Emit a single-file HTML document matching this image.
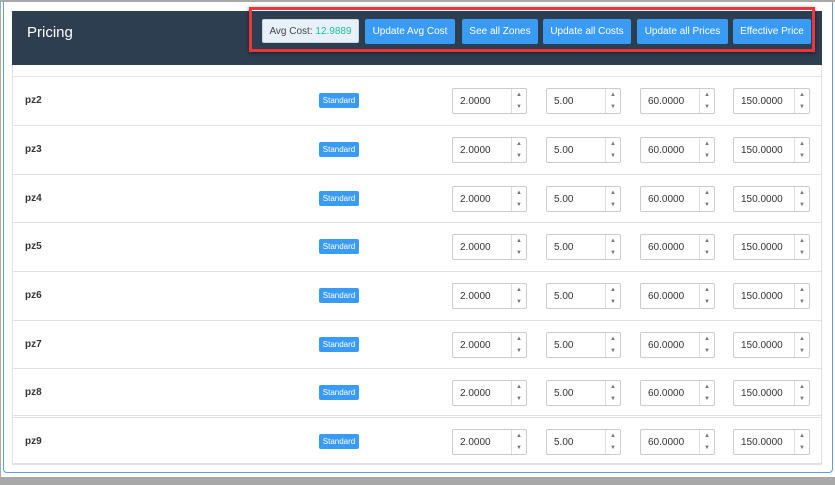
<!DOCTYPE html>
<html><head><style>
*{box-sizing:border-box;margin:0;padding:0}
body{width:835px;height:485px;background:#fff;font-family:"Liberation Sans",sans-serif;position:relative;overflow:hidden}
.abs{position:absolute}
.hdr{left:12px;top:11px;width:810px;height:54px;background:#2c3e50}
.title{left:27px;top:24px;color:#fff;font-size:15px}
.red{left:249px;top:7px;width:566px;height:45px;border:3px solid #e8363b;box-shadow:0 1px 4px rgba(0,0,0,.5)}
.avg{left:262px;top:19px;width:97px;height:24px;background:#e8f1fa;border:1px solid #c9d4de;border-radius:2px;font-size:10px;color:#444;line-height:24px;text-align:center}
.avg b{font-weight:normal;color:#1abc9c}
.btn{top:19px;height:25px;background:#3a9bf5;color:#fff;font-size:10px;line-height:26px;text-align:center;border-radius:2px}
.row{left:12px;width:810px;border-top:1px solid #e2e2e2}
.name{left:25px;font-size:10px;font-weight:bold;color:#333}
.badge{left:319px;width:40px;height:15px;background:#3a9bf5;color:#fff;font-size:8px;line-height:15px;text-align:center;border-radius:2px}
.inp{height:26px;border:1px solid #ccc;border-radius:2px;font-size:10px;color:#333;line-height:25px;padding-left:7px;background:#fff}
.sp{position:absolute;right:0;top:0;width:15px;height:24px;border-left:1px solid #ddd;font-size:6px;color:#777;line-height:12px;text-align:center}
</style></head><body>
<div class="abs" style="left:0;top:0;width:835px;height:2px;background:#a8a8a8"></div>
<div class="abs" style="left:0;top:0;width:1px;height:485px;background:#a8a8a8"></div>
<div class="abs" style="left:3px;top:2px;width:830px;height:471px;border:1px solid #5aa0e0;border-top:none;border-radius:0 0 4px 4px"></div>
<div class="abs" style="left:0;top:477px;width:835px;height:8px;background:#a8a8a8"></div>
<div class="abs" style="left:12px;top:65px;width:810px;height:399px;border:1px solid #e2e2e2;border-top:none"></div>
<div class="abs hdr"></div>
<div class="abs title">Pricing</div>
<div class="abs red"></div>
<div class="abs avg">Avg Cost: <b>12.9889</b></div>
<div class="abs btn" style="left:365px;width:90px">Update Avg Cost</div>
<div class="abs btn" style="left:462px;width:76px">See all Zones</div>
<div class="abs btn" style="left:543px;width:88px">Update all Costs</div>
<div class="abs btn" style="left:637px;width:91px">Update all Prices</div>
<div class="abs btn" style="left:733px;width:78px">Effective Price</div>
<div id="rows"></div>
<script>
var ys=[76,125,174,222,271,320,368,417];var h='';
for(var i=0;i<8;i++){var y=ys[i],c=y+25;
h+='<div class="abs row" style="top:'+y+'px"></div>';
if(i==7)h+='<div class="abs row" style="top:'+(y-2)+'px"></div>';
h+='<div class="abs name" style="top:'+(c-6)+'px">pz'+(i+2)+'</div>';
h+='<div class="abs badge" style="top:'+(c-8)+'px">Standard</div>';
var xs=[[452,75,'2.0000'],[546,75,'5.00'],[640,75,'60.0000'],[733,77,'150.0000']];
xs.forEach(function(a){h+='<div class="abs inp" style="left:'+a[0]+'px;width:'+a[1]+'px;top:'+(c-13)+'px">'+a[2]+'<div class="sp">▲<br>▼</div></div>';});}
h+='<div class="abs row" style="top:464px"></div>';
document.getElementById('rows').innerHTML=h;
</script>
</body></html>
